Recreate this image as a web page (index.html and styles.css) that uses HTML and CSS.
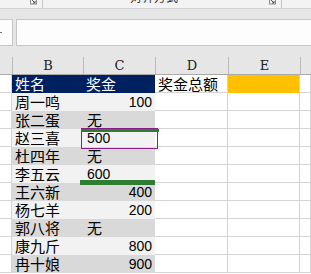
FILE: index.html
```html
<!DOCTYPE html>
<html>
<head>
<meta charset="utf-8">
<link rel="stylesheet" href="styles.css">
</head>
<body>
<div class="ribbon">
  <div class="grp grp-a">
    <svg class="launcher" width="7" height="5" viewBox="0 0 7 5"><rect x="0.5" y="-3" width="6" height="7" fill="none" stroke="#8a8a8a"/><path d="M2 0 L5 3 M3 3 H5 V1" stroke="#555" fill="none"/></svg>
  </div>
  <div class="grp grp-b">
    <span class="grp-title">对齐方式</span>
    <svg class="launcher" width="7" height="5" viewBox="0 0 7 5"><rect x="0.5" y="-3" width="6" height="7" fill="none" stroke="#8a8a8a"/><path d="M2 0 L5 3 M3 3 H5 V1" stroke="#555" fill="none"/></svg>
  </div>
</div>
<div class="fbar">
  <div class="namebox"><span class="nb-mark"></span></div>
  <div class="formula"></div>
</div>
<div class="colheads">
  <div class="ch ch-a"></div>
  <div class="ch">B</div>
  <div class="ch">C</div>
  <div class="ch">D</div>
  <div class="ch">E</div>
  <div class="ch"></div>
</div>
<div class="sheet">
  <div class="grid">
    <div class="c"></div><div class="c navy">姓名</div><div class="c navy">奖金</div><div class="c">奖金总额</div><div class="c gold"></div><div class="c"></div>
    <div class="c"></div><div class="c lt">周一鸣</div><div class="c lt num">100</div><div class="c"></div><div class="c"></div><div class="c"></div>
    <div class="c"></div><div class="c dk">张二蛋</div><div class="c dk txt">无</div><div class="c"></div><div class="c"></div><div class="c"></div>
    <div class="c"></div><div class="c lt">赵三喜</div><div class="c lt txt tnum">500</div><div class="c"></div><div class="c"></div><div class="c"></div>
    <div class="c"></div><div class="c dk">杜四年</div><div class="c dk txt">无</div><div class="c"></div><div class="c"></div><div class="c"></div>
    <div class="c"></div><div class="c lt">李五云</div><div class="c lt txt tnum">600</div><div class="c"></div><div class="c"></div><div class="c"></div>
    <div class="c"></div><div class="c dk">王六新</div><div class="c dk num">400</div><div class="c"></div><div class="c"></div><div class="c"></div>
    <div class="c"></div><div class="c lt">杨七羊</div><div class="c lt num">200</div><div class="c"></div><div class="c"></div><div class="c"></div>
    <div class="c"></div><div class="c dk">郭八将</div><div class="c dk txt">无</div><div class="c"></div><div class="c"></div><div class="c"></div>
    <div class="c"></div><div class="c lt">康九斤</div><div class="c lt num">800</div><div class="c"></div><div class="c"></div><div class="c"></div>
    <div class="c"></div><div class="c dk">冉十娘</div><div class="c dk num">900</div><div class="c"></div><div class="c"></div><div class="c"></div>
  </div>
  <div class="sel-box"></div>
  <div class="bar bar-1"></div>
  <div class="bar bar-2"></div>
</div>
</body>
</html>
```
FILE: styles.css
```css
html, body {
  margin: 0;
  padding: 0;
  background: #ffffff;
  overflow: hidden;
}
body {
  width: 311px;
  height: 274px;
  font-family: "Noto Sans CJK SC", "Noto Sans", sans-serif;
  color: #000;
}
.ribbon {
  height: 8px;
  background: #f3f3f3;
  border-bottom: 1px solid #d2d2d2;
  display: flex;
  overflow: hidden;
}
.grp {
  height: 8px;
  border-right: 1px solid #c8c8c8;
  display: flex;
  align-items: flex-start;
  box-sizing: border-box;
  overflow: hidden;
}
.grp-a {
  width: 43px;
  justify-content: flex-end;
  padding-right: 5px;
}
.grp-b {
  width: 239px;
  padding-left: 87px;
  padding-right: 5px;
}
.grp-title {
  font-size: 12px;
  line-height: 12px;
  margin-top: -9px;
  color: #333;
  flex: 1;
}
.launcher {
  display: block;
}
.fbar {
  background: #e6e6e6;
  height: 48px;
  padding-top: 10px;
  padding-bottom: 11px;
  box-sizing: border-box;
  display: flex;
  gap: 3px;
  overflow: hidden;
}
.namebox {
  width: 33px;
  margin-left: -20px;
  height: 27px;
  box-sizing: border-box;
  background: #fdfdfd;
  border: 1px solid #c6c6c6;
  position: relative;
}
.nb-mark {
  position: absolute;
  left: 19px;
  top: 12px;
  width: 2px;
  height: 1px;
  background: #777;
}
.formula {
  flex: 1;
  height: 27px;
  margin-right: -3px;
  box-sizing: border-box;
  background: #fdfdfd;
  border: 1px solid #c6c6c6;
}
.colheads {
  display: grid;
  grid-template-columns: 12px 71px 72px 73px 72px 1fr;
  height: 18px;
  background: #e6e6e6;
  border-bottom: 1px solid #a9a9a9;
  box-sizing: border-box;
}
.ch {
  border-left: 1px solid #b9b9b9;
  font-family: "DejaVu Serif", "Liberation Serif", serif;
  font-size: 13px;
  line-height: 17px;
  text-align: center;
  color: #222;
}
.ch-a {
  border-left: none;
}
.sheet {
  position: relative;
}
.grid {
  display: grid;
  grid-template-columns: 12px 71px 72px 73px 72px 1fr;
  grid-auto-rows: 18px;
}
.c {
  box-sizing: border-box;
  border-right: 1px solid #d4d4d4;
  border-bottom: 1px solid #d4d4d4;
  font-size: 15px;
  line-height: 17px;
  white-space: nowrap;
  padding-left: 3px;
}
.navy {
  background: #002060;
  border-color: transparent;
  color: #fff;
}
.gold {
  background: #ffc000;
  border-bottom-color: transparent;
}
.lt {
  background: #f2f2f2;
  border-color: transparent;
}
.dk {
  background: #d9d9d9;
  border-color: transparent;
}
.txt {
  padding-left: 4px;
}
.num {
  text-align: right;
  padding-right: 2px;
  font-family: "Liberation Sans", Arial, sans-serif;
  font-size: 14px;
  line-height: 18px;
}
.tnum {
  font-family: "Liberation Sans", Arial, sans-serif;
  font-size: 14px;
  line-height: 18px;
}
.sel-box {
  position: absolute;
  left: 81px;
  top: 53px;
  width: 77px;
  height: 21px;
  box-sizing: border-box;
  border: 1px solid #8a1c8a;
}
.bar {
  position: absolute;
  background: #2e7d32;
}
.bar-1 {
  left: 81px;
  top: 54px;
  width: 78px;
  height: 3px;
}
.bar-2 {
  left: 80px;
  top: 105px;
  width: 75px;
  height: 5px;
}
```
